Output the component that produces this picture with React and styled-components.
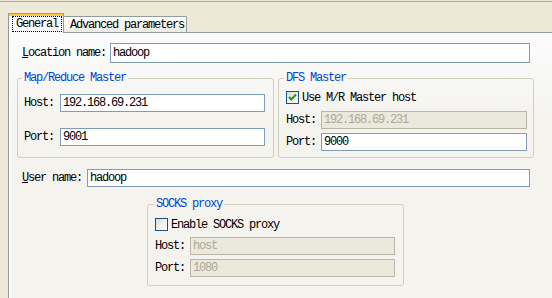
import React from 'react';
import styled, { createGlobalStyle } from 'styled-components';

const Global = createGlobalStyle`
  html, body { margin: 0; padding: 0; background: #ece9d8; }
  body { font-family: "Liberation Mono", monospace; font-size: 12px; }
  #root { width: 552px; height: 298px; overflow: hidden; }
`;

const FONT = `font-family: "Liberation Mono", "Courier New", monospace; font-size: 12px; letter-spacing: -1.2px;`;

const Window = styled.div`
  width: 552px;
  height: 298px;
  box-sizing: border-box;
  padding-top: 1px;
  background: #ece9d8;
  display: flex;
  flex-direction: column;
  overflow: hidden;
`;

const TabStrip = styled.div`
  border-top: 1px solid #aca899;
  height: 30px;
  display: flex;
  align-items: flex-end;
  padding-left: 8px;
  position: relative;
  z-index: 2;
`;

const Tab = styled.div`
  ${FONT}
  box-sizing: border-box;
  display: flex;
  align-items: center;
  color: #000;
  position: relative;
  ${(p) =>
    p.$active
      ? `
    width: 56px;
    height: 20px;
    margin-bottom: -1px;
    background: #fcfcfe;
    border: 1px solid #919b9c;
    border-bottom: none;
    border-top: 1px solid #e68b2c;
    box-shadow: inset 0 2px 0 #ffc73c;
    padding: 2px 0 0 3px;
    align-items: flex-start;
  `
      : `
    width: 123px;
    height: 16px;
    background: linear-gradient(#ffffff, #ecebe6);
    border: 1px solid #919b9c;
    border-left: none;
    border-bottom: none;
    border-radius: 0 2px 0 0;
    padding: 0 0 0 6px;
  `}
`;

const FocusLabel = styled.span`
  box-sizing: border-box;
  display: flex;
  align-items: center;
  height: 16px;
  padding: 0 3px 0 3px;
  border: 1px dotted #000;
`;

const Pane = styled.div`
  flex: 1;
  margin-left: 8px;
  border-left: 1px solid #919b9c;
  border-top: 1px solid #919b9c;
  background: linear-gradient(#fcfcfe 0, #f4f3ee 90px, #f4f3ee 100%);
  box-shadow: inset 1px 0 0 #ffffff, inset 2px 0 0 #fbfaf5;
  padding: 10px 18px 0 8px;
  display: flex;
  flex-direction: column;
  position: relative;
  z-index: 1;
`;

const Row = styled.div`
  display: flex;
  align-items: center;
  gap: ${(p) => p.$gap ?? 5}px;
  padding: ${(p) => p.$pad ?? '0'};
  margin-top: ${(p) => p.$top ?? 0}px;
`;

const Label = styled.span`
  ${FONT}
  color: #000;
  white-space: nowrap;
  line-height: 14px;
`;

const Mnemonic = styled.span`
  text-decoration: underline;
`;

const Input = styled.input`
  ${FONT}
  flex: 1;
  min-width: 0;
  box-sizing: border-box;
  height: ${(p) => p.$h ?? 18}px;
  margin: 0;
  padding: 0 2px;
  border: 1px solid #7f9db9;
  background: #ffffff;
  color: #000;
  outline: none;
  &:disabled {
    background: #ebe9dc;
    border-color: #b9b6a8;
    color: #aca899;
  }
`;

const Groups = styled.div`
  display: grid;
  grid-template-columns: 257px 256px;
  column-gap: 4px;
  margin-top: 9px;
`;

const Group = styled.fieldset`
  box-sizing: border-box;
  margin: 0;
  min-width: 0;
  border: 1px solid #d0d0bf;
  border-radius: 3px;
  padding: ${(p) => p.$pad};
  display: flex;
  flex-direction: column;
  gap: ${(p) => p.$gap}px;
  ${(p) => (p.$width ? `width: ${p.$width}px; align-self: center;` : '')}
  ${(p) => (p.$top ? `margin-top: ${p.$top}px;` : '')}
`;

const Legend = styled.legend`
  ${FONT}
  color: #0046d5;
  line-height: 12px;
  padding: 0 2px;
  margin-left: ${(p) => p.$shift ?? -2}px;
`;

const CheckRow = styled.label`
  display: flex;
  align-items: center;
  gap: 3px;
  ${FONT}
  color: #000;
  height: 13px;
`;

const Box = styled.span`
  box-sizing: border-box;
  width: 13px;
  height: 13px;
  flex: none;
  border: 1px solid #1c5180;
  background: linear-gradient(135deg, #dcdcd7 0%, #f2f2ee 60%, #ffffff 100%);
  display: flex;
  align-items: center;
  justify-content: center;
`;

const Check = ({ checked }) => (
  <Box>
    {checked && (
      <svg width="11" height="11" viewBox="0 0 11 11">
        <path d="M2 5 L4.3 7.4 L9 2.6" fill="none" stroke="#21a121" strokeWidth="2.2" />
      </svg>
    )}
  </Box>
);

export default function App() {
  return (
    <Window>
      <Global />
      <TabStrip>
        <Tab $active>
          <FocusLabel>General</FocusLabel>
        </Tab>
        <Tab>Advanced parameters</Tab>
      </TabStrip>
      <Pane>
        <Row $gap={4} $pad="0 4px 0 5px">
          <Label>
            <Mnemonic>L</Mnemonic>ocation name:
          </Label>
          <Input $h={20} defaultValue="hadoop" />
        </Row>

        <Groups>
          <Group $pad="10px 8px 11px 6px" $gap={16}>
            <Legend>Map/Reduce Master</Legend>
            <Row $gap={6}>
              <Label>Host:</Label>
              <Input defaultValue="192.168.69.231" />
            </Row>
            <Row $gap={6}>
              <Label>Port:</Label>
              <Input defaultValue="9001" />
            </Row>
          </Group>
          <Group $pad="7px 6px 6px 7px" $gap={4}>
            <Legend>DFS Master</Legend>
            <CheckRow>
              <Check checked />
              Use M/R Master host
            </CheckRow>
            <Row $gap={5} $top={3}>
              <Label>Host:</Label>
              <Input disabled defaultValue="192.168.69.231" />
            </Row>
            <Row $gap={5}>
              <Label>Port:</Label>
              <Input defaultValue="9000" />
            </Row>
          </Group>
        </Groups>

        <Row $gap={5} $pad="0 4px 0 5px" $top={11}>
          <Label>
            <Mnemonic>U</Mnemonic>ser name:
          </Label>
          <Input defaultValue="hadoop" />
        </Row>

        <Group $pad="8px 8px 8px 7px" $gap={6} $width={257} $top={11}>
          <Legend $shift={-1}>SOCKS proxy</Legend>
          <CheckRow>
            <Check />
            Enable SOCKS proxy
          </CheckRow>
          <Row $gap={5}>
            <Label>Host:</Label>
            <Input disabled defaultValue="host" />
          </Row>
          <Row $gap={5} $top={-2}>
            <Label>Port:</Label>
            <Input disabled defaultValue="1080" />
          </Row>
        </Group>
      </Pane>
    </Window>
  );
}
